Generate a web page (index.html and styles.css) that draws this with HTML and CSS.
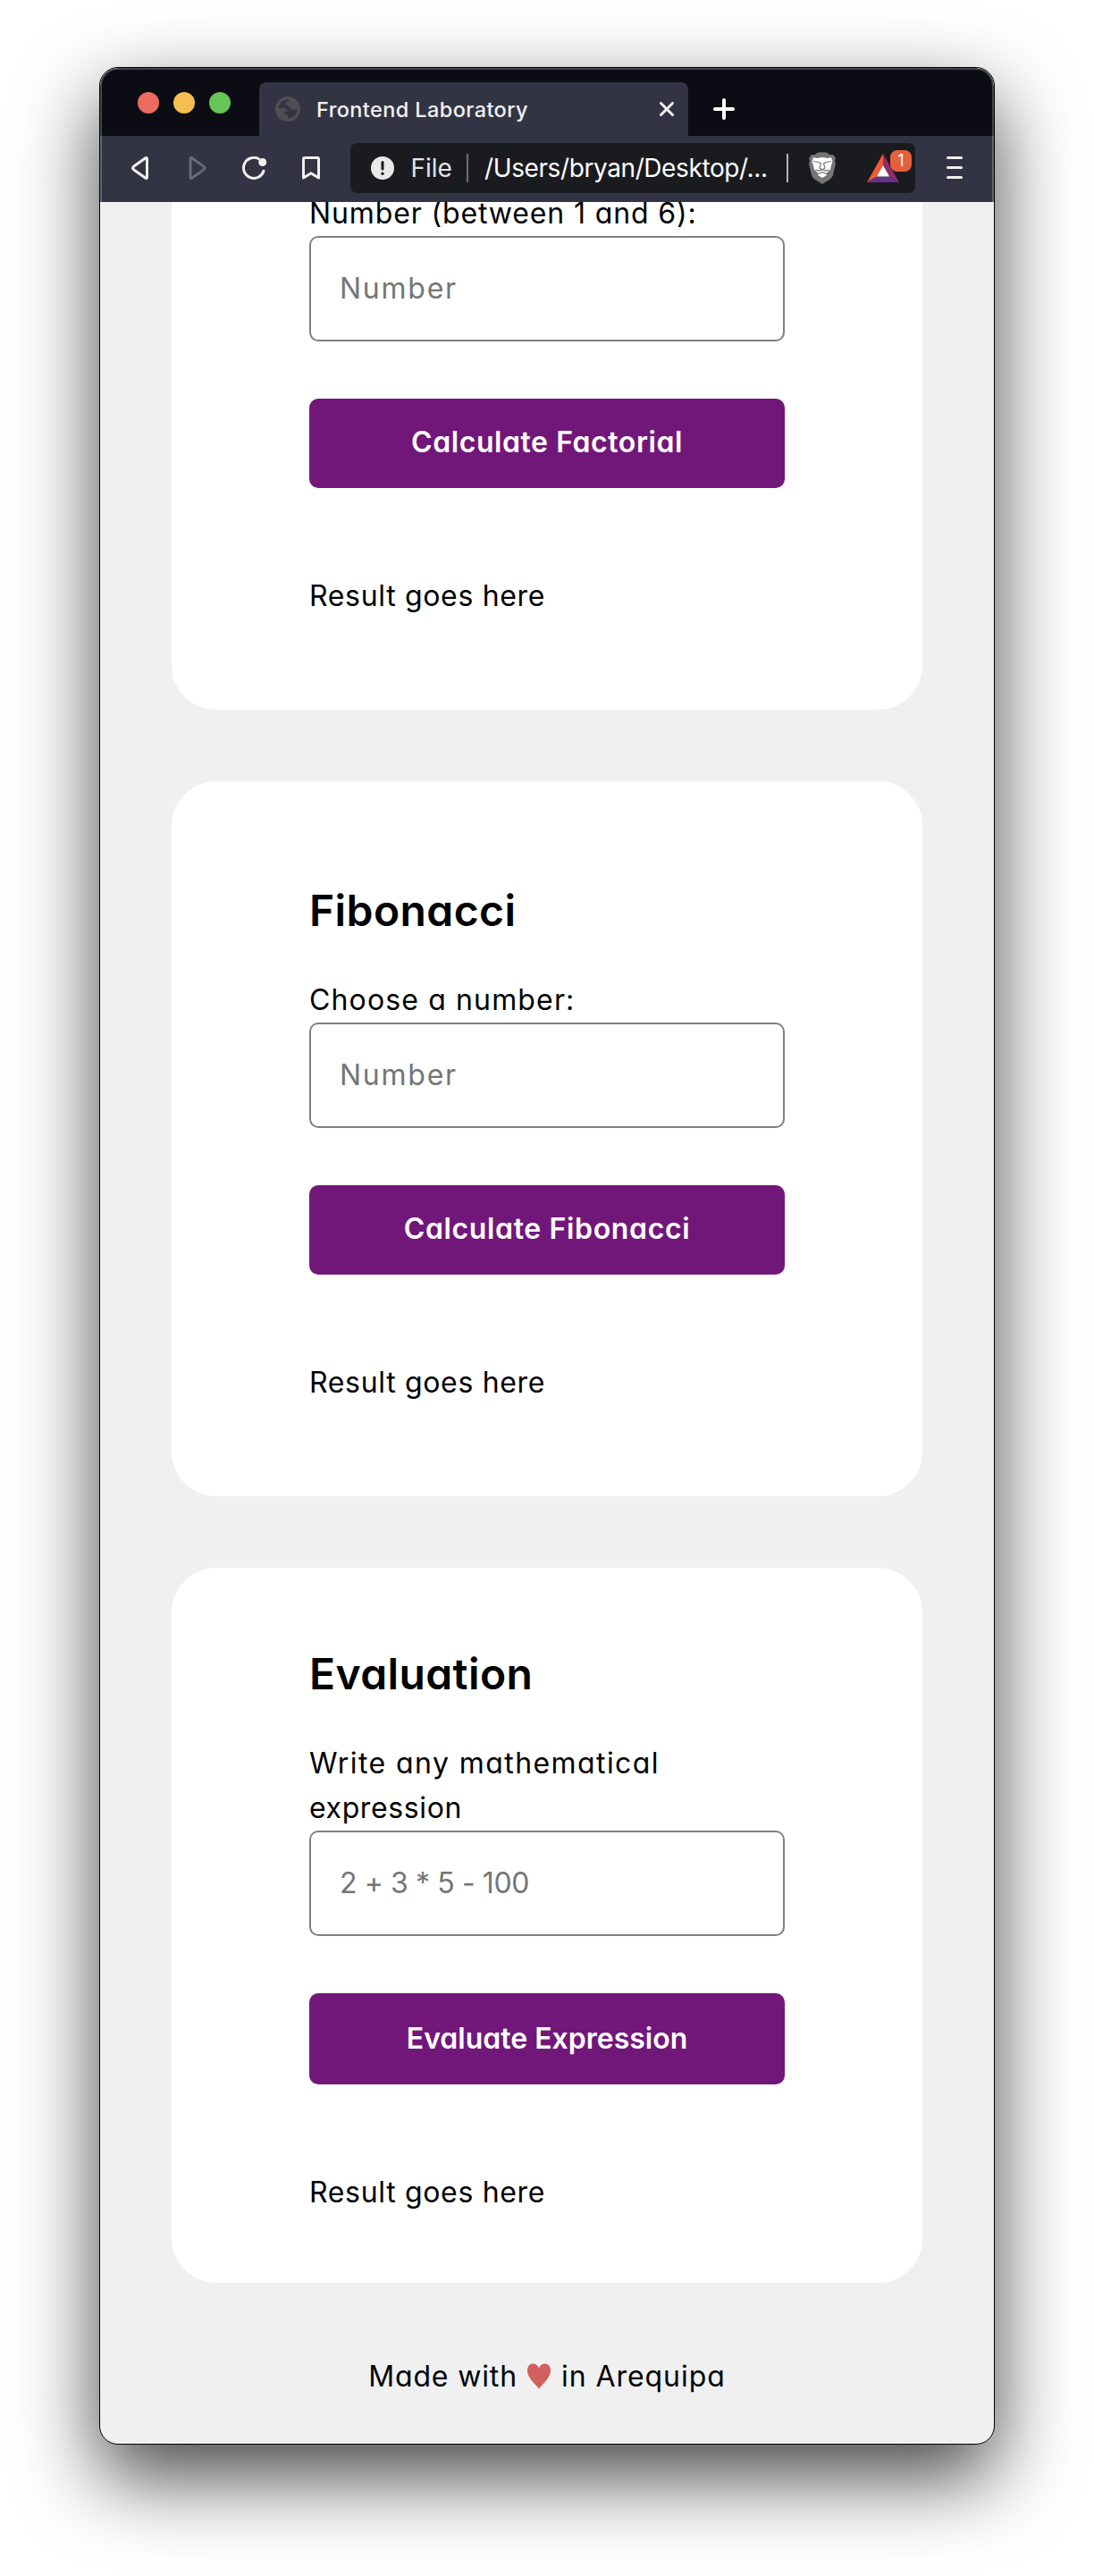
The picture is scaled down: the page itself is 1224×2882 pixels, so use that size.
FILE: index.html
```html
<!DOCTYPE html>
<html lang="en">
<head>
<meta charset="utf-8">
<title>Frontend Laboratory</title>
<link rel="stylesheet" href="styles.css">
</head>
<body>
<div class="window">
  <header class="chrome">
    <div class="tabstrip">
      <div class="lights"><span class="light red"></span><span class="light yellow"></span><span class="light green"></span></div>
      <div class="tab">
        <svg class="globe" viewBox="0 0 28 28" width="28" height="28"><circle cx="14" cy="14" r="12.3" fill="none" stroke="#4e4f54" stroke-width="3.4"/><path d="M2 13H9.5C12.5 13 13.5 14.5 13.5 17H10.5V20.5H14V26L10 25L3 18ZM15 2V5.5C12 5.5 11 7 11 9.5C14 9.5 15.5 10.5 16.5 12.5C18 15 21 15.500 25 14V8L20 3Z" fill="#4e4f54"/></svg>
        <span class="tab-title">Frontend Laboratory</span>
        <svg class="close" viewBox="0 0 16 16" width="16" height="16"><path d="M1.500 1.500L14.500 14.500M14.500 1.500L1.500 14.500" stroke="#f0f0f1" stroke-width="3" stroke-linecap="round"/></svg>
      </div>
      <svg class="plus" viewBox="0 0 24 24" width="24" height="24"><path d="M12 2V22M2 12H22" stroke="#fff" stroke-width="4" stroke-linecap="round"/></svg>
    </div>
    <div class="toolbar">
      <svg class="back" viewBox="0 0 20 26" width="20" height="26"><path d="M17.500 3Q17.500 0.800 15.500 2L2.500 11.300Q0.500 13 2.500 14.700L15.500 24Q17.500 25.200 17.500 23Z" fill="none" stroke="#f0f0f0" stroke-width="3" stroke-linejoin="round"/></svg>
      <svg class="forward" viewBox="0 0 20 26" width="20" height="26"><path d="M2 3Q2 0.800 4 2L17 11.300Q19 13 17 14.700L4 24Q2 25.200 2 23Z" fill="none" stroke="#686a72" stroke-width="3" stroke-linejoin="round"/></svg>
      <svg class="reload" viewBox="0 0 28 26" width="28" height="26"><path d="M18.500 2.800A11.500 11.500 0 1 0 24 16.300" fill="none" stroke="#f0f0f0" stroke-width="3" stroke-linecap="round"/><circle cx="22.700" cy="6.500" r="4.500" fill="#f0f0f0"/></svg>
      <svg class="bookmark" viewBox="0 0 20 26" width="20" height="26"><path d="M3 1.500H17Q18.500 1.500 18.500 3V24L10 18.800L1.500 24V3Q1.500 1.500 3 1.500Z" fill="none" stroke="#f0f0f0" stroke-width="3" stroke-linejoin="round"/></svg>
      <div class="address">
        <svg class="info" viewBox="0 0 26 26" width="26" height="26"><circle cx="13" cy="13" r="13" fill="#e9e9e9"/><path d="M13 6.500V14" stroke="#1a1b1f" stroke-width="3" stroke-linecap="round"/><circle cx="13" cy="19.300" r="1.700" fill="#1a1b1f"/></svg>
        <span class="scheme">File</span>
        <span class="rule dim"></span>
        <span class="url">/Users/bryan/Desktop/...</span>
        <span class="rule"></span>
        <svg class="lion" viewBox="0 0 32 36" width="32" height="36"><path d="M10 1Q16-0.500 22 1L24 3L28 3L31 7L30 10L31 13L28 26Q27 29 24 31L16 36L8 31Q5 29 4 26L1 13L2 10L1 7L4 3L8 3Z" fill="#757575"/><path d="M10 7L16 6L22 7L26 6L27.500 11L26 15L25 20L20 24L21 26L16 29L11 26L12 24L7 20L6 15L4.500 11L6 6Z" fill="#fff"/><path d="M6 10.500L12 11.500L14.500 13L13 18L16 20L19 18L17.500 13L20 11.500L26 10.500M8 20L12.500 21L16 19.500L19.500 21L24 20M12 24.500L16 22.500L20 24.500" fill="none" stroke="#757575" stroke-width="1.200"/></svg>
        <div class="rewards">
          <svg viewBox="0 0 36 32" width="36" height="32"><path d="M18 0L0 32L11 25.500L18 13Z" fill="#f15a32"/><path d="M18 0L36 32L25 25.500L18 13Z" fill="#922b68"/><path d="M0 32L11 25.500H25L36 32Z" fill="#63308f"/><path d="M18 13L25.200 25.500H10.800Z" fill="#fff"/></svg>
          <span class="badge">1</span>
        </div>
      </div>
      <div class="menu"><span></span><span></span><span></span></div>
    </div>
  </header>
  <main class="page">
    <section class="card clipped">
      <label class="label between" for="factorial">Number (between 1 and 6):</label>
      <input class="field number" id="factorial" placeholder="Number">
      <button class="button factorial">Calculate Factorial</button>
      <p class="result">Result goes here</p>
    </section>
    <section class="card">
      <h2 class="heading">Fibonacci</h2>
      <label class="label choose" for="fibonacci">Choose a number:</label>
      <input class="field number" id="fibonacci" placeholder="Number">
      <button class="button fibonacci">Calculate Fibonacci</button>
      <p class="result">Result goes here</p>
    </section>
    <section class="card evaluation">
      <h2 class="heading">Evaluation</h2>
      <label class="label write" for="expression">Write any mathematical <span class="second">expression</span></label>
      <input class="field sum" id="expression" placeholder="2 + 3 * 5 - 100">
      <button class="button evaluate">Evaluate Expression</button>
      <p class="result">Result goes here</p>
    </section>
    <footer class="footer">
      <span class="made">Made with</span>
      <svg viewBox="0 0 26 29" width="26" height="29"><path d="M13 28.500C9 23.500 0 16 0 8C0 3 3 0.500 6.500 0.500C9.500 0.500 12 2.500 13 5.500C14 2.500 16.500 0.500 19.500 0.500C23 0.500 26 3 26 8C26 16 17 23.500 13 28.500Z" fill="#d1605e"/></svg>
      <span class="place">in Arequipa</span>
    </footer>
  </main>
</div>
</body>
</html>
```
FILE: styles.css
```css
* { box-sizing: border-box; }

body {
  margin: 0;
  height: 2882px;
  padding: 75px 111px 0;
  overflow: hidden;
  background: #fff;
  font-family: Inter, "Liberation Sans", sans-serif;
  color: #000;
}

svg { display: block; flex: none; }

.window {
  width: 1002px;
  height: 2660px;
  border: 1px solid #000;
  border-radius: 21px;
  overflow: hidden;
  background: #f0f0f0;
  box-shadow: 0 36px 90px rgba(0, 0, 0, 0.73);
}

.chrome {
  height: 150px;
  border-radius: 20px 20px 0 0;
  overflow: hidden;
  background: linear-gradient(#0c0c15 76px, #323443 76px);
  border: 2px solid rgba(255, 255, 255, 0.23);
  border-bottom: 0;
  background-origin: border-box;
}

.tabstrip {
  height: 74px;
  padding: 14px 0 0 40px;
  display: flex;
}

.lights { display: flex; gap: 16px; padding-top: 11px; width: 136px; }
.light { width: 24px; height: 24px; border-radius: 50%; }
.red { background: #ec6b5f; }
.yellow { background: #f4bf50; }
.green { background: #65c657; }

.tab {
  width: 480px;
  height: 60px;
  padding: 0 16px 0 18px;
  display: flex;
  align-items: center;
  border-radius: 8px 8px 0 0;
  background: #323443;
}

.tab-title {
  margin-left: 18px;
  font-size: 23.5px;
  font-weight: 500;
  letter-spacing: 0.4px;
  color: #f1f1f3;
}

.close { margin-left: auto; }
.plus { margin: 18px 0 0 28px; }

.toolbar {
  height: 74px;
  padding: 8px 0 0 33px;
  display: flex;
}

.back, .forward, .reload, .bookmark { margin-top: 15px; }
.forward { margin-left: 44px; }
.reload { margin-left: 40px; }
.bookmark { margin-left: 39px; }

.address {
  width: 632px;
  height: 56px;
  margin-left: 34px;
  padding-left: 23px;
  display: flex;
  align-items: center;
  border-radius: 8px;
  background: #1a1b1f;
  font-size: 28px;
  color: #fff;
}

.scheme { width: 61px; padding-left: 18.5px; color: #e4e4e6; white-space: nowrap; }
.rule { width: 2px; height: 32px; background: #b3b3b5; }
.rule.dim { margin-left: 20px; background: #6d6e71; }
.url { width: 338px; margin-left: 18px; letter-spacing: -0.4px; white-space: nowrap; }
.lion { margin-left: 22px; }
.rewards { position: relative; margin-left: 34px; }

.badge {
  position: absolute;
  left: 26px;
  top: -4px;
  width: 24px;
  height: 24px;
  border-radius: 8px;
  background: #e5613c;
  font-size: 18px;
  line-height: 24px;
  text-align: center;
}

.menu {
  width: 18px;
  margin: 15px 0 0 35px;
  display: flex;
  flex-direction: column;
  gap: 8px;
}
.menu span { height: 3px; border-radius: 2px; background: #f0f0f0; }

.page {
  height: 2508px;
  padding: 0 80px;
  overflow: hidden;
  display: flex;
  flex-direction: column;
  gap: 80px;
  font-size: 32px;
  line-height: 50px;
  font-feature-settings: "cv11";
}

.card {
  flex: none;
  height: 800px;
  padding: 110px 154px 0;
  border-radius: 50px;
  background: #fff;
}
.card.clipped { height: 580px; margin-top: -12px; padding-top: 0; border-radius: 0 0 50px 50px; }
.card.evaluation { padding-top: 84px; }

.heading {
  margin: 0 0 40px;
  font-size: 48px;
  line-height: 70px;
  font-weight: 600;
  letter-spacing: 0.4px;
}

.label { display: block; }
.between { letter-spacing: 0.87px; }
.choose { letter-spacing: 1.14px; }
.write { letter-spacing: 1.42px; }
.second { display: block; letter-spacing: 0.62px; }

.field {
  display: block;
  width: 532px;
  height: 118px;
  padding: 0 32px 2px;
  border: 2px solid #808080;
  border-radius: 10px;
  background: #fff;
  font: inherit;
  font-feature-settings: inherit;
}
.field::placeholder { color: #757575; opacity: 1; }
.number { letter-spacing: 1.75px; }
.sum { letter-spacing: -0.4px; }

.button {
  display: block;
  width: 532px;
  height: 100px;
  margin: 64px 0 96px;
  padding: 0 0 2px;
  border: 0;
  border-radius: 10px;
  background: #72177a;
  color: #fff;
  font: inherit;
  font-weight: 600;
  font-feature-settings: inherit;
}
.button.factorial { letter-spacing: 0.57px; }
.button.fibonacci { letter-spacing: 0.65px; }
.button.evaluate { height: 102px; padding-bottom: 0; letter-spacing: 0; }

.result { margin: 0; letter-spacing: 0.67px; }

.footer {
  height: 50px;
  display: flex;
  justify-content: center;
  align-items: center;
}
.footer svg { margin: 0 12px 2px 11px; }
.made { letter-spacing: 0.85px; }
.place { letter-spacing: 0.95px; }
```
